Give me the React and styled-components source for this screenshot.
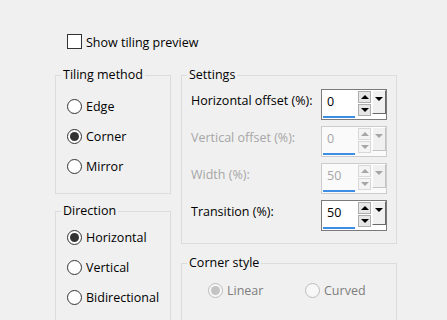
import React from "react";
import styled, { createGlobalStyle } from "styled-components";

const GlobalStyle = createGlobalStyle`
  html, body {
    margin: 0;
    background: #f0f0f0;
  }
  body {
    font-family: "Open Sans", "Noto Sans", sans-serif;
    font-size: 12.5px;
    color: #000;
  }
`;

const Page = styled.div`
  width: 447px;
  height: 320px;
  overflow: hidden;
  box-sizing: border-box;
  padding: 34px 0 0 55px;
`;

const CheckRow = styled.label`
  display: flex;
  align-items: center;
  gap: 4px;
  margin-left: 12px;
  height: 15px;
  line-height: 15px;
`;

const CheckText = styled.span`
  padding-top: 2px;
`;

const CheckBox = styled.span`
  width: 15px;
  height: 15px;
  box-sizing: border-box;
  border: 1px solid #333;
  background: #fff;
`;

const Columns = styled.div`
  display: flex;
  align-items: flex-start;
  gap: 10px;
  margin-top: 18px;
`;

const Column = styled.div`
  width: ${(p) => p.$width}px;
  display: flex;
  flex-direction: column;
  gap: ${(p) => p.$gap}px;
`;

const Group = styled.fieldset`
  margin: 0;
  padding: 0;
  min-width: 0;
  border: 1px solid #dcdcdc;
`;

const Legend = styled.legend`
  margin-left: 5px;
  padding: 0 2px;
  line-height: 16px;
  color: #000;
`;

const GroupBody = styled.div`
  padding: ${(p) => p.$pad};
  display: ${(p) => (p.$grid ? "grid" : "flex")};
  flex-direction: column;
  grid-template-columns: 97px auto;
  gap: ${(p) => p.$gap || 0}px;
`;

const OptionRow = styled.div`
  display: flex;
  align-items: center;
  gap: 4px;
  height: 30px;
  color: ${(p) => (p.$disabled ? "#7d7d7d" : "#000")};
`;

const RadioDot = styled.span`
  width: 15px;
  height: 15px;
  box-sizing: border-box;
  border-radius: 50%;
  border: 1px solid ${(p) => (p.$disabled ? "#bcbcbc" : "#333")};
  background: ${(p) => (p.$disabled ? "#f7f7f7" : "#fff")};
  display: grid;
  place-items: center;
  flex: none;

  &::after {
    content: "";
    display: ${(p) => (p.$checked ? "block" : "none")};
    width: 9px;
    height: 9px;
    border-radius: 50%;
    background: ${(p) => (p.$disabled ? "#c4c4c4" : "#333")};
  }
`;

const SettingRow = styled.div`
  display: flex;
  justify-content: space-between;
  align-items: flex-start;
  height: 31px;
`;

const SettingLabel = styled.span`
  line-height: 24px;
  color: ${(p) => (p.$disabled ? "#a6a6a6" : "#000")};
`;

const SpinBox = styled.div`
  width: 66px;
  height: 31px;
  box-sizing: border-box;
  border: 1px solid ${(p) => (p.$disabled ? "#cccccc" : "#7a7a7a")};
  background: ${(p) => (p.$disabled ? "#fafafa" : "#fff")};
  display: flex;
  align-items: flex-start;
`;

const SpinField = styled.div`
  width: 32px;
  height: 28px;
  box-sizing: border-box;
  margin-left: 1px;
  padding-left: 4px;
  line-height: 24px;
  border-bottom: 2px solid #3d8ee3;
  color: ${(p) => (p.$disabled ? "#a6a6a6" : "#000")};
`;

const Spinner = styled.div`
  display: flex;
  flex-direction: column;
  gap: 1px;
  margin: 1px 0 0 3px;
`;

const SpinButton = styled.span`
  width: 13px;
  height: 12px;
  box-sizing: border-box;
  border: 1px solid ${(p) => (p.$disabled ? "#d8d8d8" : "#adadad")};
  background: ${(p) => (p.$disabled ? "#f4f4f4" : "#e6e6e6")};
  display: grid;
  place-items: center;
`;

const Arrow = styled.span`
  width: 0;
  height: 0;
  border-left: 4px solid transparent;
  border-right: 4px solid transparent;
  ${(p) => (p.$up ? "border-bottom" : "border-top")}: 4px solid
    ${(p) => (p.$disabled ? "#a6a6a6" : "#000")};
`;

const DropButton = styled.span`
  width: 14px;
  height: 24px;
  box-sizing: border-box;
  margin-left: 1px;
  padding-top: 6px;
  background: #f0f0f0;
  border-top: 1px solid #fff;
  border-left: 1px solid #fff;
  border-right: 1px solid ${(p) => (p.$disabled ? "#c4c4c4" : "#696969")};
  border-bottom: 1px solid ${(p) => (p.$disabled ? "#c4c4c4" : "#696969")};
  display: flex;
  justify-content: center;
  align-items: flex-start;
`;

const Spin = ({ value, disabled }) => (
  <SpinBox $disabled={disabled}>
    <SpinField $disabled={disabled}>{value}</SpinField>
    <Spinner>
      <SpinButton $disabled={disabled}>
        <Arrow $up $disabled={disabled} />
      </SpinButton>
      <SpinButton $disabled={disabled}>
        <Arrow $disabled={disabled} />
      </SpinButton>
    </Spinner>
    <DropButton $disabled={disabled}>
      <Arrow $disabled={disabled} />
    </DropButton>
  </SpinBox>
);

const Option = ({ label, checked, disabled }) => (
  <OptionRow $disabled={disabled}>
    <RadioDot $checked={checked} $disabled={disabled} />
    {label}
  </OptionRow>
);

const settings = [
  { label: "Horizontal offset (%):", value: "0" },
  { label: "Vertical offset (%):", value: "0", disabled: true },
  { label: "Width (%):", value: "50", disabled: true },
  { label: "Transition (%):", value: "50" },
];

const App = () => (
  <Page>
    <GlobalStyle />
    <CheckRow>
      <CheckBox />
      <CheckText>Show tiling preview</CheckText>
    </CheckRow>
    <Columns>
      <Column $width={116} $gap={9}>
        <Group>
          <Legend>Tiling method</Legend>
          <GroupBody $pad="8px 0 12px 11px">
            <Option label="Edge" />
            <Option label="Corner" checked />
            <Option label="Mirror" />
          </GroupBody>
        </Group>
        <Group>
          <Legend>Direction</Legend>
          <GroupBody $pad="3px 0 20px 11px">
            <Option label="Horizontal" checked />
            <Option label="Vertical" />
            <Option label="Bidirectional" />
          </GroupBody>
        </Group>
      </Column>
      <Column $width={216} $gap={11}>
        <Group>
          <Legend>Settings</Legend>
          <GroupBody $pad="6px 9px 12px 9px" $gap={6}>
            {settings.map((s) => (
              <SettingRow key={s.label}>
                <SettingLabel $disabled={s.disabled}>{s.label}</SettingLabel>
                <Spin value={s.value} disabled={s.disabled} />
              </SettingRow>
            ))}
          </GroupBody>
        </Group>
        <Group>
          <Legend>Corner style</Legend>
          <GroupBody $pad="4px 0 30px 26px" $grid>
            <Option label="Linear" checked disabled />
            <Option label="Curved" disabled />
          </GroupBody>
        </Group>
      </Column>
    </Columns>
  </Page>
);

export default App;
